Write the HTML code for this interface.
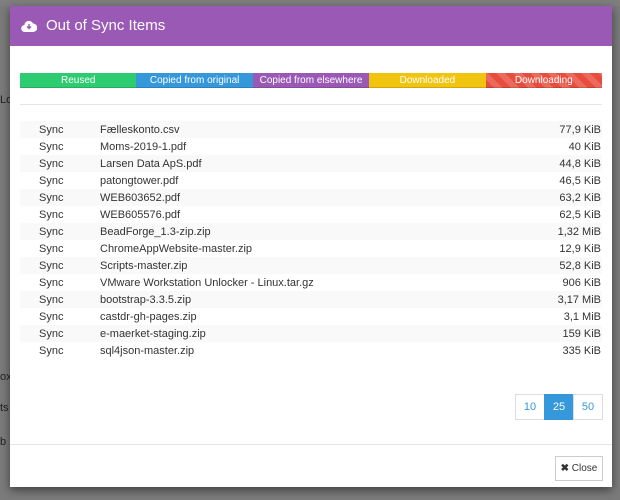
<!DOCTYPE html>
<html><head><meta charset="utf-8"><style>
body{margin:0;width:620px;height:500px;overflow:hidden;background:#7b7b7b;font-family:"Liberation Sans",sans-serif;position:relative}
.bgtop{position:absolute;left:0;top:0;width:620px;height:6px;background:#7f7f7f}
.modal{position:absolute;left:10px;top:6px;width:602px;height:481px;background:#fff;box-shadow:0 3px 9px rgba(0,0,0,.5)}
.hdr{height:40px;background:#9b59b6;color:#fff;font-size:15px;line-height:40px;padding-left:36px;position:relative}
.hdr svg{position:absolute;left:11px;top:13px}
.bar{position:absolute;left:10px;top:67px;width:582px;height:15px;display:flex;font-size:10px;color:#fff;line-height:15px;text-align:center}
.bar div{flex:1;box-shadow:inset 0 -1px 0 rgba(0,0,0,.15)}
.sep{position:absolute;left:10px;top:98px;width:582px;height:1px;background:#e5e5e5}
table{position:absolute;left:10px;top:115px;width:582px;border-collapse:collapse;font-size:11px;color:#333}
td{height:17px;padding:0}
tr:nth-child(odd){background:#f9f9f9}
td.a{padding-left:19px;width:61px}
td.c{text-align:right;padding-right:1px}
.pg{position:absolute;left:506px;top:388px;display:flex;font-size:11px}
.pg div{width:28px;height:24px;line-height:24px;text-align:center;border:1px solid #ddd;margin-left:-1px;color:#3498db}
.pg .on{background:#3498db;color:#fff;border-color:#3498db}
.fsep{position:absolute;left:0;top:438px;width:602px;height:1px;background:#e5e5e5}
.close{position:absolute;left:545px;top:450px;width:46px;height:23px;border:1px solid #ccc;font-size:10px;line-height:23px;text-align:center;color:#333}
.f{position:absolute;color:#222;font-size:11px}
</style></head><body>
<div class="bgtop"></div>
<div class="f" style="left:0;top:94px">Lo</div>
<div class="f" style="left:0;top:371px">ox</div>
<div class="f" style="left:0;top:402px">ts</div>
<div class="f" style="left:0;top:436px">b</div>
<div class="modal">
<div class="hdr"><svg width="16" height="14" viewBox="0 0 16 14"><path d="M4 13a3.5 3.5 0 0 1-.6-7A4.5 4.5 0 0 1 12 4.5a3.5 3.5 0 0 1 0 8.5z" fill="#fff"/><path d="M8 5v4M6 7.5l2 2 2-2" stroke="#9b59b6" stroke-width="1.4" fill="none"/></svg>Out of Sync Items</div>
<div class="bar"><div style="background:#2ecc71">Reused</div><div style="background:#3498db">Copied from original</div><div style="background:#9b59b6">Copied from elsewhere</div><div style="background:#f1c40f">Downloaded</div><div style="background:repeating-linear-gradient(45deg,#e74c3c 0 6px,#ec6a5d 6px 12px)">Downloading</div></div>
<div class="sep"></div>
<table>
<tr><td class="a">Sync</td><td>Fælleskonto.csv</td><td class="c">77,9 KiB</td></tr>
<tr><td class="a">Sync</td><td>Moms-2019-1.pdf</td><td class="c">40 KiB</td></tr>
<tr><td class="a">Sync</td><td>Larsen Data ApS.pdf</td><td class="c">44,8 KiB</td></tr>
<tr><td class="a">Sync</td><td>patongtower.pdf</td><td class="c">46,5 KiB</td></tr>
<tr><td class="a">Sync</td><td>WEB603652.pdf</td><td class="c">63,2 KiB</td></tr>
<tr><td class="a">Sync</td><td>WEB605576.pdf</td><td class="c">62,5 KiB</td></tr>
<tr><td class="a">Sync</td><td>BeadForge_1.3-zip.zip</td><td class="c">1,32 MiB</td></tr>
<tr><td class="a">Sync</td><td>ChromeAppWebsite-master.zip</td><td class="c">12,9 KiB</td></tr>
<tr><td class="a">Sync</td><td>Scripts-master.zip</td><td class="c">52,8 KiB</td></tr>
<tr><td class="a">Sync</td><td>VMware Workstation Unlocker - Linux.tar.gz</td><td class="c">906 KiB</td></tr>
<tr><td class="a">Sync</td><td>bootstrap-3.3.5.zip</td><td class="c">3,17 MiB</td></tr>
<tr><td class="a">Sync</td><td>castdr-gh-pages.zip</td><td class="c">3,1 MiB</td></tr>
<tr><td class="a">Sync</td><td>e-maerket-staging.zip</td><td class="c">159 KiB</td></tr>
<tr><td class="a">Sync</td><td>sql4json-master.zip</td><td class="c">335 KiB</td></tr>
</table>
<div class="pg"><div>10</div><div class="on">25</div><div>50</div></div>
<div class="fsep"></div>
<div class="close"><b>✖</b> Close</div>
</div>
</body></html>
